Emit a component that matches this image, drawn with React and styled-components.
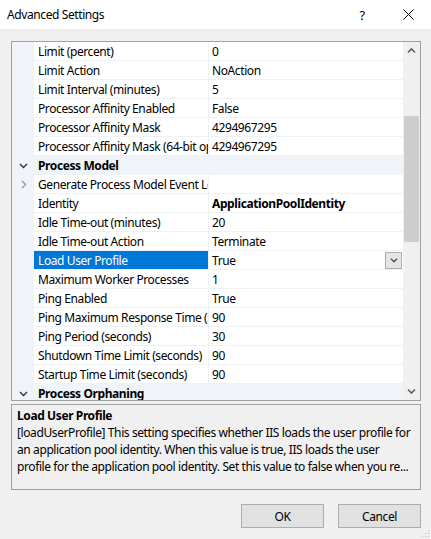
import React from 'react'
import styled, { createGlobalStyle } from 'styled-components'

const GlobalStyle = createGlobalStyle`
  html, body {
    margin: 0;
    padding: 0;
    background: #f0f0f0;
  }
  body {
    font-family: 'Noto Sans', 'Open Sans', sans-serif;
    font-size: 12px;
    letter-spacing: -0.4px;
    color: #000;
  }
`

const Window = styled.div`
  width: 431px;
  height: 539px;
  display: flex;
  flex-direction: column;
  background: #f0f0f0;
  position: relative;
  overflow: hidden;
`
const TitleBar = styled.div`
  height: 29px;
  background: #fff;
  display: flex;
  align-items: center;
  padding-left: 7px;
`
const Title = styled.div`
  flex: 1;
  font-size: 12px;
  color: #000;
`
const TitleBtn = styled.div`
  width: 46px;
  height: 29px;
  display: flex;
  justify-content: center;
  align-items: center;
  font-size: 13px;
  color: #000;
`
const Body = styled.div`
  flex: 1;
  display: flex;
  flex-direction: column;
  padding: 12px 10px 0 11px;
`
const GridBox = styled.div`
  height: 358px;
  border: 1px solid #a0a0a0;
  display: flex;
  background: #fff;
`
const List = styled.div`
  flex: 1;
  overflow: hidden;
  display: flex;
  flex-direction: column;
`
const Row = styled.div`
  height: 19px;
  flex-shrink: 0;
  display: flex;
  background: ${(p) => (p.category ? '#f0f4f9' : '#fff')};
`
const Gutter = styled.div`
  width: 21px;
  flex-shrink: 0;
  background: #f0f4f9;
  display: flex;
  justify-content: center;
  align-items: center;
  padding-left: 1px;
`
const Name = styled.div`
  width: 170px;
  flex-shrink: 0;
  padding-left: 4px;
  border-bottom: 1px solid #eef2f7;
  border-right: 1px solid #eef2f7;
  display: flex;
  align-items: center;
  white-space: nowrap;
  overflow: hidden;
  background: ${(p) => (p.selected ? '#0078d7' : 'transparent')};
  color: ${(p) => (p.selected ? '#fff' : '#000')};
`
const Value = styled.div`
  flex: 1;
  min-width: 0;
  padding-left: 3px;
  border-bottom: 1px solid #eef2f7;
  display: flex;
  align-items: center;
  white-space: nowrap;
  overflow: hidden;
  font-weight: ${(p) => (p.bold ? 700 : 400)};
`
const ValueText = styled.span`
  flex: 1;
`
const CategoryName = styled.div`
  flex: 1;
  padding-left: 4px;
  display: flex;
  align-items: center;
  font-weight: 700;
  white-space: nowrap;
`
const DropBtn = styled.div`
  width: 15px;
  height: 15px;
  margin-right: 1px;
  border: 1px solid #adadad;
  background: #e5e5e5;
  display: flex;
  justify-content: center;
  align-items: center;
`
const ScrollBar = styled.div`
  width: 17px;
  flex-shrink: 0;
  background: #f0f0f0;
  display: flex;
  flex-direction: column;
`
const ScrollArrow = styled.div`
  height: 17px;
  display: flex;
  justify-content: center;
  align-items: center;
`
const Track = styled.div`
  flex: 1;
  display: flex;
  flex-direction: column;
  align-items: center;
`
const Thumb = styled.div`
  width: 15px;
  background: #cdcdcd;
`
const DescBox = styled.div`
  margin-top: 3px;
  height: 80px;
  border: 1px solid #a0a0a0;
  padding: 2px 5px;
  display: flex;
  flex-direction: column;
`
const DescTitle = styled.div`
  font-weight: 700;
  line-height: 17px;
`
const DescLine = styled.div`
  line-height: 17px;
  white-space: nowrap;
`
const Footer = styled.div`
  display: flex;
  justify-content: flex-end;
  gap: 14px;
  margin-top: 14px;
`
const Button = styled.div`
  width: 81px;
  height: 22px;
  border: 1px solid #adadad;
  background: #e1e1e1;
  display: flex;
  justify-content: center;
  align-items: center;
`
const Grip = styled.svg`
  position: absolute;
  right: 1px;
  bottom: 1px;
`

const ChevronDown = ({ color = '#333', size = 9 }) => (
  <svg width={size} height={size} viewBox="0 0 9 9">
    <path d="M1 3 L4.5 6.5 L8 3" fill="none" stroke={color} strokeWidth="1.4" />
  </svg>
)
const ChevronRight = ({ color = '#999' }) => (
  <svg width="9" height="9" viewBox="0 0 9 9">
    <path d="M3 1 L6.5 4.5 L3 8" fill="none" stroke={color} strokeWidth="1.4" />
  </svg>
)
const ArrowUp = () => (
  <svg width="9" height="7" viewBox="0 0 9 7">
    <path d="M1 5.5 L4.5 2 L8 5.5" fill="none" stroke="#606060" strokeWidth="1.6" />
  </svg>
)
const ArrowDown = () => (
  <svg width="9" height="7" viewBox="0 0 9 7">
    <path d="M1 1.5 L4.5 5 L8 1.5" fill="none" stroke="#606060" strokeWidth="1.6" />
  </svg>
)

const rows = [
  { name: 'Limit (percent)', value: '0' },
  { name: 'Limit Action', value: 'NoAction' },
  { name: 'Limit Interval (minutes)', value: '5' },
  { name: 'Processor Affinity Enabled', value: 'False' },
  { name: 'Processor Affinity Mask', value: '4294967295' },
  { name: 'Processor Affinity Mask (64-bit option)', value: '4294967295' },
  { category: 'Process Model' },
  { name: 'Generate Process Model Event Log Entry', value: '', expand: true },
  { name: 'Identity', value: 'ApplicationPoolIdentity', bold: true },
  { name: 'Idle Time-out (minutes)', value: '20' },
  { name: 'Idle Time-out Action', value: 'Terminate' },
  { name: 'Load User Profile', value: 'True', selected: true },
  { name: 'Maximum Worker Processes', value: '1' },
  { name: 'Ping Enabled', value: 'True' },
  { name: 'Ping Maximum Response Time (seconds)', value: '90' },
  { name: 'Ping Period (seconds)', value: '30' },
  { name: 'Shutdown Time Limit (seconds)', value: '90' },
  { name: 'Startup Time Limit (seconds)', value: '90' },
  { category: 'Process Orphaning' },
]

const App = () => {
  return (
    <Window>
      <GlobalStyle />
      <TitleBar>
        <Title>Advanced Settings</Title>
        <TitleBtn>?</TitleBtn>
        <TitleBtn>
          <svg width="11" height="11" viewBox="0 0 11 11">
            <path d="M0.5 0.5 L10.5 10.5 M10.5 0.5 L0.5 10.5" stroke="#000" strokeWidth="1" />
          </svg>
        </TitleBtn>
      </TitleBar>
      <Body>
        <GridBox>
          <List>
            {rows.map((r, i) =>
              r.category ? (
                <Row key={i} category>
                  <Gutter>
                    <ChevronDown />
                  </Gutter>
                  <CategoryName>{r.category}</CategoryName>
                </Row>
              ) : (
                <Row key={i}>
                  <Gutter>{r.expand && <ChevronRight />}</Gutter>
                  <Name selected={r.selected}>{r.name}</Name>
                  <Value bold={r.bold}>
                    <ValueText>{r.value}</ValueText>
                    {r.selected && (
                      <DropBtn>
                        <ChevronDown color="#444" size={8} />
                      </DropBtn>
                    )}
                  </Value>
                </Row>
              )
            )}
          </List>
          <ScrollBar>
            <ScrollArrow>
              <ArrowUp />
            </ScrollArrow>
            <Track>
              <Thumb style={{ marginTop: 57, height: 126 }} />
            </Track>
            <ScrollArrow>
              <ArrowDown />
            </ScrollArrow>
          </ScrollBar>
        </GridBox>
        <DescBox>
          <DescTitle>Load User Profile</DescTitle>
          <DescLine>
            [loadUserProfile] This setting specifies whether IIS loads the user profile for
          </DescLine>
          <DescLine>
            an application pool identity. When this value is true, IIS loads the user
          </DescLine>
          <DescLine>
            profile for the application pool identity. Set this value to false when you re...
          </DescLine>
        </DescBox>
        <Footer>
          <Button>OK</Button>
          <Button>Cancel</Button>
        </Footer>
      </Body>
      <Grip width="9" height="9" viewBox="0 0 9 9">
        {[
          [7, 1],
          [7, 4],
          [4, 4],
          [7, 7],
          [4, 7],
          [1, 7],
        ].map(([x, y], i) => (
          <rect key={i} x={x} y={y} width="1" height="1" fill="#b8b8b8" />
        ))}
      </Grip>
    </Window>
  )
}

export default App
